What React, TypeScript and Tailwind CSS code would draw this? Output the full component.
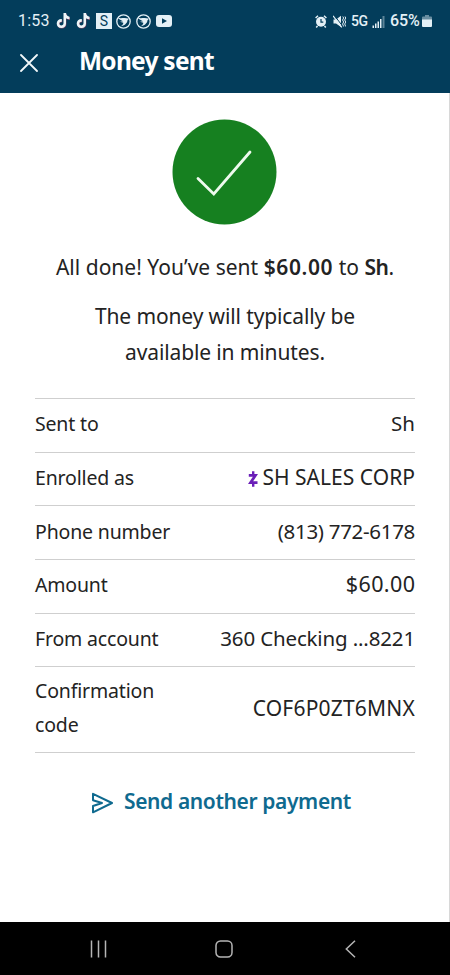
import type { ReactNode } from 'react';

export default function App() {
  return (
    <main className="flex h-[975px] w-[450px] flex-col overflow-hidden bg-white font-['Noto_Sans',sans-serif] text-[#232323]">
      <header className="h-[93px] shrink-0 bg-[#033d5b] text-white">
        <StatusBar />
        <div className="flex h-[38px] items-center pl-5">
          <svg className="mt-1 h-[18px] w-[18px]" viewBox="0 0 18 18" fill="none" stroke="#f2f8fa" strokeWidth="1.8" strokeLinecap="round">
            <path d="M1 1l16 16M17 1L1 17" />
          </svg>
          <h1 className="ml-[41px] text-[24.5px] leading-9 font-bold tracking-[-0.75px] whitespace-nowrap">Money sent</h1>
        </div>
      </header>

      <div className="flex flex-1 flex-col border-r border-[#d8d8d8]">
        <svg className="mt-[26px] ml-[172px] h-[106px] w-[105px] shrink-0" viewBox="0 0 105 106" fill="none">
          <ellipse cx="52.5" cy="53" rx="52" ry="52.5" fill="#168020" />
          <path d="M26 59.5L41.8 75L78 33" stroke="#eefaee" strokeWidth="2.8" strokeLinecap="round" />
        </svg>

        <p className="mt-[24px] pl-px text-center text-[21px] leading-9 tracking-[0.02px] whitespace-nowrap">
          All done! You’ve sent <b className="font-semibold tracking-[0.6px]">$60.00</b> to <b className="font-semibold tracking-[-0.5px]">Sh</b>.
        </p>
        <p className="mt-[13px] pl-px text-center text-[21px] leading-9 tracking-[-0.12px]">
          The money will typically be
          <br />
          available in minutes.
        </p>

        <dl className="mt-[28px] mr-[34px] ml-[35px] border-b border-[#cfcfcf]">
          <Row label="Sent to">Sh</Row>
          <Row label="Enrolled as">
            <svg className="mt-[3px] mr-1 h-4 w-[10px]" viewBox="0 0 10 16" fill="none" stroke="#6a1fb8" strokeWidth="2.8">
              <path d="M.8 4.300H7.500L2.500 11.700H9.500" />
              <path d="M5.200 .3V4M5.200 12V15.700" strokeWidth="2.4" />
            </svg>
            <span className="text-[21px] tracking-[0.03px]">SH SALES CORP</span>
          </Row>
          <Row label="Phone number">
            <span className="tracking-[-0.3px]">(813) 772-6178</span>
          </Row>
          <Row label="Amount">
            <span className="mr-[-0.4px] text-[21.5px] tracking-[0.4px]">$60.00</span>
          </Row>
          <Row label="From account">
            <span className="tracking-[-0.15px]">360 Checking ...8221</span>
          </Row>
          <div className="flex h-[86px] items-center justify-between border-t border-[#cfcfcf] pb-[3px]">
            <dt className="w-[140px] text-[19.5px] leading-[34px] tracking-[-0.17px]">Confirmation code</dt>
            <dd className="text-[21px] tracking-[0.2px]">COF6P0ZT6MNX</dd>
          </div>
        </dl>

        <button className="mt-[30px] ml-[91px] flex items-center text-[#0f6a8f]">
          <svg className="mt-1 h-[22px] w-[22px]" viewBox="0 0 22 22" fill="none" stroke="currentColor" strokeWidth="2" strokeLinejoin="round" strokeLinecap="round">
            <path d="M2 1.800L21 11L2 20.300V14L11 11L2 8.300Z" />
          </svg>
          <span className="ml-[11px] text-[21px] leading-9 font-semibold tracking-[-0.38px] whitespace-nowrap">Send another payment</span>
        </button>
      </div>

      <nav className="flex h-[53px] shrink-0 items-center bg-black">
        <svg className="ml-[90px] h-[18px] w-[17px]" viewBox="0 0 17 18" stroke="#b5b5b5" strokeWidth="1.5">
          <path d="M1.500 .5V17.500M8.500 .5V17.500M15.500 .5V17.500" />
        </svg>
        <svg className="ml-[108px] h-[18px] w-[18px]" viewBox="0 0 18 18" fill="none" stroke="#b5b5b5" strokeWidth="1.5">
          <rect x="1" y="1" width="16" height="16" rx="4.500" />
        </svg>
        <svg className="ml-[112px] h-[18px] w-[11px]" viewBox="0 0 11 18" fill="none" stroke="#b5b5b5" strokeWidth="1.5">
          <path d="M10 .7L1.300 9L10 17.300" />
        </svg>
      </nav>
    </main>
  );
}

function Row({ label, children }: { label: string; children: ReactNode }) {
  return (
    <div className="flex h-[53.7px] items-center justify-between border-t border-[#cfcfcf] pb-1">
      <dt className="mt-0.5 text-[19.5px] leading-8 tracking-[-0.17px] whitespace-nowrap">{label}</dt>
      <dd className="flex items-center text-[20.5px] leading-8 whitespace-nowrap">{children}</dd>
    </div>
  );
}

function StatusBar() {
  return (
    <div className="flex h-[42px] items-center pl-[18px] font-[Roboto,sans-serif] text-[#e4f0f6]">
      <span className="w-[38px] text-[16px] tracking-[0.2px]">1:53</span>
      <TikTok />
      <TikTok />
      <span className="mr-1 flex h-4 w-4 items-center justify-center bg-[#e4f0f6] text-[14px] leading-4 text-[#033d5b]">S</span>
      <Bird />
      <Bird />
      <svg className="h-3 w-4" viewBox="0 0 16 12">
        <rect width="16" height="12" rx="3" fill="currentColor" />
        <path d="M6 3.300L11 6L6 8.700Z" fill="#033d5b" />
      </svg>

      <svg className="ml-[143px] h-[13px] w-3" viewBox="0 0 12 13" fill="none" stroke="currentColor">
        <circle cx="6" cy="6.800" r="5" fill="currentColor" stroke="none" />
        <path d="M.6 3L3 .8M11.400 3L9 .8M2.500 11L1.200 12.500M9.500 11L10.800 12.500" strokeWidth="1.500" />
        <path d="M6 4V7.200H8.300" stroke="#033d5b" strokeWidth="1.200" />
      </svg>
      <svg className="ml-[6px] h-[13px] w-[13px]" viewBox="0 0 13 13" fill="none" stroke="currentColor">
        <path d="M.5 4.500H3L8 .8V12L3 8.500H.5Z" fill="currentColor" stroke="none" />
        <path d="M1 0L9.500 11" stroke="#033d5b" strokeWidth="1" />
        <path d="M0 .8L8.800 12.300" strokeWidth="1.300" />
        <path d="M9.800 1.500L10.600 3L9.600 5L10.600 7L9.600 9L10.600 11.500M12 1.500L12.700 3L11.700 5L12.700 7L11.700 9L12.700 11.500" strokeWidth="1" />
      </svg>
      <span className="ml-[5px] w-[20px] text-[14px] font-medium tracking-[-0.5px]">5G</span>
      <svg className="mt-px ml-px h-3 w-[13px]" viewBox="0 0 13 12" fill="currentColor">
        <path d="M.5 9.500h1.500V12H.5ZM3 7.500h1.500V12H3ZM5.500 5.500H7V12H5.500ZM8 3h1.500v9H8Z" />
        <path d="M10.500 0H12.500V12H10.500Z" opacity=".4" />
      </svg>
      <span className="ml-[5px] w-[32px] text-[16px] font-medium tracking-[-0.1px]">65%</span>
      <svg className="h-3 w-[10px]" viewBox="0 0 10 12" fill="currentColor">
        <path d="M3 0H7V1.500H9Q10 1.500 10 2.500V5H0V2.500Q0 1.500 1 1.500H3Z" opacity=".45" />
        <path d="M0 4.500H10V11Q10 12 9 12H1Q0 12 0 11Z" />
      </svg>
    </div>
  );
}

function TikTok() {
  const note = 'M7.500 0H10C10.200 2 11.500 3.500 13.500 3.700V6.300C12.200 6.300 11 5.900 10 5.200V10.500C10 13.300 8 15 5.500 15C2.500 15 .7 13 .7 10.500C.7 7.800 2.900 5.900 5.800 6.100V8.700C4.300 8.500 3.300 9.300 3.300 10.500C3.300 11.700 4.200 12.400 5.300 12.400C6.600 12.400 7.500 11.600 7.500 10.200Z';
  return (
    <svg className="mr-[6px] h-4 w-[14px]" viewBox="0 0 14 16">
      <path d={note} fill="#8c4a66" transform="translate(.4 .6)" />
      <path d={note} fill="#eef6f8" />
    </svg>
  );
}

function Bird() {
  return (
    <svg className="mr-[5px] h-[15px] w-[15px]" viewBox="0 0 15 15" fill="none" stroke="currentColor">
      <circle cx="7.500" cy="7.500" r="6.700" strokeWidth="1.300" />
      <path d="M2 3.800C5 4.800 9 3.200 13 4.800L11.500 6.300C11.200 9.500 8.500 11.500 4.500 12.500C6.500 11 7.500 9.800 7.300 8.800L4 7.800L7 7.200C5 6.500 3 5.500 2 3.800Z" fill="currentColor" stroke="none" />
    </svg>
  );
}
